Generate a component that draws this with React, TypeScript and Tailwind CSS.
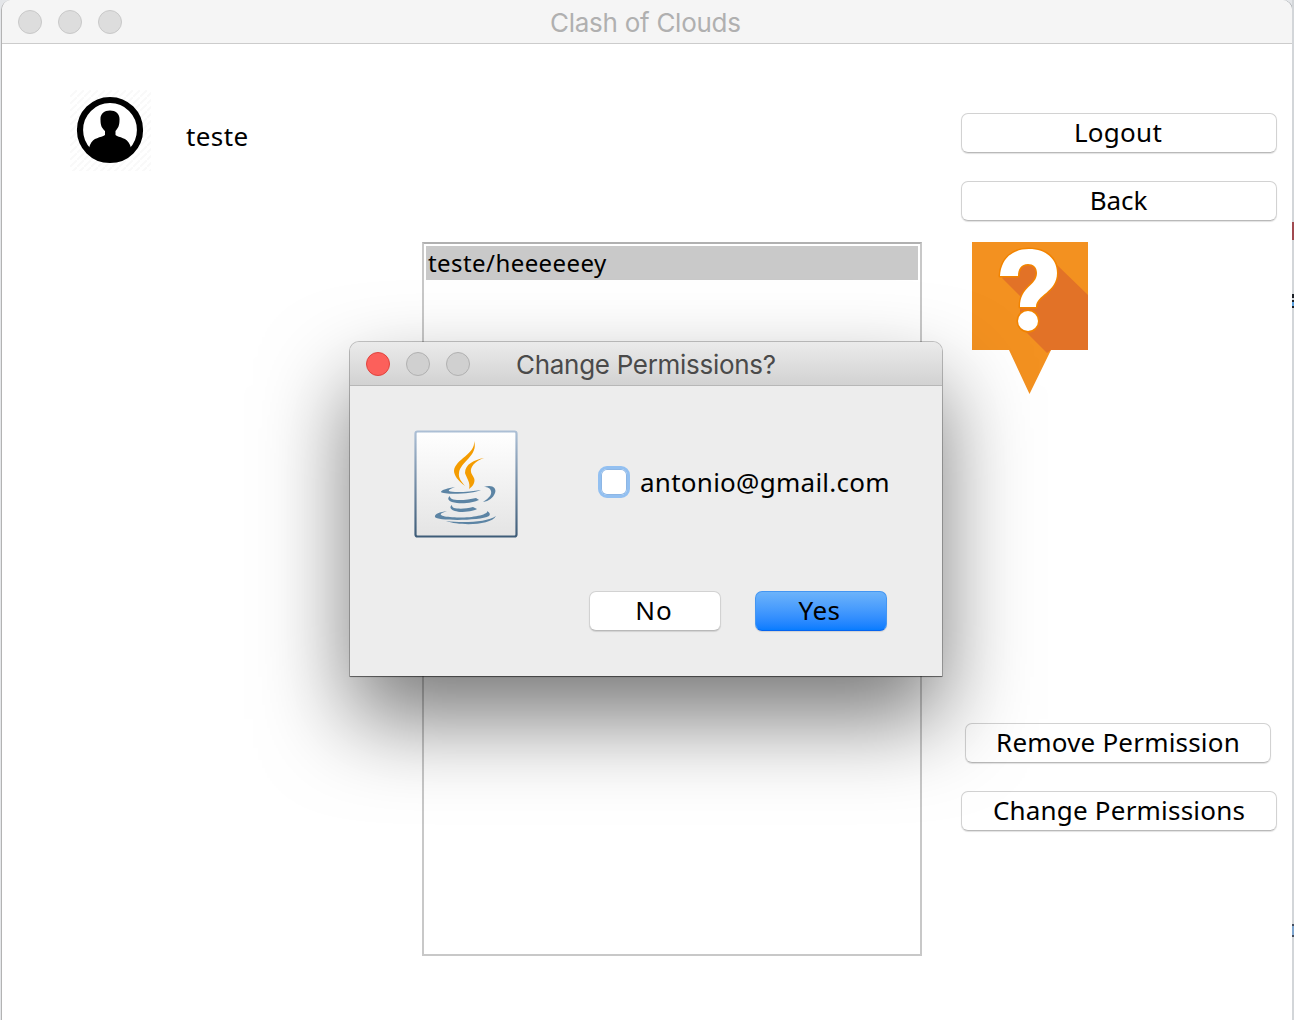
import type { ReactNode } from "react";

function Light({ red = false, dim = false }: { red?: boolean; dim?: boolean }) {
  const tone = red
    ? "border-[#e0443e] bg-[#fc605b]"
    : dim
      ? "border-[#c8c8c8] bg-[#dddddd]"
      : "border-[#b1b1b1] bg-[#d0d0d0]";
  return <span className={`h-6 w-6 rounded-full border ${tone}`} />;
}

function PushButton({
  children,
  className = "",
  primary = false,
}: {
  children: ReactNode;
  className?: string;
  primary?: boolean;
}) {
  const tone = primary
    ? "border-[#4496f2] border-b-[#0564ef] bg-linear-to-b from-[#6cb3fa] to-[#067cff]"
    : "border-[#d2d2d2] border-b-[#b9b9b9]";
  return (
    <button
      className={`flex h-10 items-center justify-center whitespace-nowrap rounded-[7px] border pb-0.5 text-[26px] leading-none text-black shadow-[0_1px_1px_rgba(0,0,0,0.12)] ${tone} ${className}`}
    >
      {children}
    </button>
  );
}

function Avatar() {
  return (
    <svg width="82" height="82" viewBox="0 0 82 82">
      <defs>
        <pattern id="hatch" width="7" height="7" patternUnits="userSpaceOnUse">
          <path d="M-1 8L8-1" stroke="#f9f9f9" strokeWidth="2" />
        </pattern>
        <clipPath id="disc">
          <circle cx="40" cy="40" r="32" />
        </clipPath>
      </defs>
      <rect width="81" height="81" fill="url(#hatch)" />
      <circle cx="40" cy="40" r="30" fill="white" stroke="black" strokeWidth="6.2" />
      <g clipPath="url(#disc)">
        <path d="M30.500 30C30 24 34 20.500 40 20.500S50 24 49.500 30C49.500 36 48 38 45.500 41V45C49 48 57 47 60 55L63 64Q54 74 40 74T17 64L20 55C23 47 31 48 35 45V41C32 38 30.500 36 30.500 30Z" />
      </g>
    </svg>
  );
}

function HelpPin() {
  return (
    <svg width="116" height="152" viewBox="0 0 116 152">
      <path d="M0 0H116V108H79L57.500 152L37 108H0Z" fill="#f39120" />
      <path d="M30 36L48 54V84L75 111L79 108H116V53L84 22L50 12Z" fill="#e27227" />
      <g stroke="#f28400" strokeWidth="3" strokeLinejoin="round" paintOrder="stroke" fill="white">
        <path d="M28 34C29 17 40 7 57 7C74 7 85 17 85 31C85 50 64 53 64 65H48C48 44 65 44 65 31C65 25 61 22 56 22C49 22 46 27 46 34Z" />
        <circle cx="56" cy="79" r="10" />
      </g>
    </svg>
  );
}

function JavaIcon() {
  return (
    <svg width="104" height="108" viewBox="0 0 104 108">
      <defs>
        <linearGradient id="tile" x2="0" y2="1">
          <stop stopColor="#fff" />
          <stop offset="1" stopColor="#e4e4e4" />
        </linearGradient>
        <linearGradient id="rim" x2="0" y2="1">
          <stop stopColor="#acbfd5" />
          <stop offset="1" stopColor="#3e5c78" />
        </linearGradient>
      </defs>
      <rect x="1.500" y="1.500" width="101" height="105" rx="2" fill="url(#tile)" stroke="url(#rim)" strokeWidth="2.200" />
      <g fill="#f49c00">
        <path d="M60 11C65 25 46 32 45 43C44 48 48 52 51 56C44 51 40 45 40 41C41 29 62 24 60 11Z" />
        <path d="M70 28C61 31 56 37 57 42C58 46 62 48 60 53C59 56 57 57 55 59C57 53 52 47 51 43C51 34 60 30 70 28Z" />
      </g>
      <g fill="#5c84a4">
        <path d="M41 57C34 58 27 60 27 62C30 65 60 64 67 60C55 62 39 63 35 61C34 60 38 58 41 57Z" />
        <path d="M70 57C78 54 83 58 81 63C79 68 75 71 69 72C75 68 78 65 77 61C76 58 74 57 70 57Z" />
        <path d="M36 66C32 69 35 72 43 73C51 74 61 72 65 70L62 68C54 70 42 71 38 69C36 68 36 67 36 66Z" />
        <path d="M38 75C34 78 38 81 46 82C53 82 60 81 63 79L59 77C52 79 44 79 40 78C38 77 38 76 38 75Z" />
        <path d="M33 81C26 82 20 84 21 87C23 91 66 91 75 86C77 84 75 82 73 81C75 84 61 87.500 48 87.500C34 87.500 23 86 28 83Z" />
        <path d="M32 91C48 93 73 92.500 82 86C77 95.500 46 96 32 91Z" />
      </g>
    </svg>
  );
}

function Dialog() {
  return (
    <section className="absolute left-[350px] top-[342px] h-[334px] w-[592px] rounded-t-[9px] bg-[#ededed] shadow-[0_0_0_1px_rgba(0,0,0,0.22),0_1px_1px_rgba(0,0,0,0.4),0_43px_88px_rgba(0,0,0,0.53)]">
      <header className="flex h-11 items-center rounded-t-[9px] border-b border-[#b7b7b7] bg-linear-to-b from-[#ebebeb] to-[#d2d2d2] pl-4 pt-px">
        <div className="flex gap-4">
          <Light red />
          <Light />
          <Light />
        </div>
        <h2 className="ml-[46px] whitespace-nowrap pt-px font-['Inter',sans-serif] text-[26px] tracking-[-0.3px] text-[#4a4a4a]">
          Change Permissions?
        </h2>
      </header>
      <div className="flex items-start pl-16 pt-11">
        <JavaIcon />
        <label className="ml-20 mt-9 flex h-8 items-center">
          <span className="h-8 w-8 rounded-[9px] border-[3px] border-[#93c0f1] bg-white shadow-[inset_0_0_0_1px_#8db6e4]" />
          <span className="ml-[10px] whitespace-nowrap text-[26px] tracking-[0.26px]">antonio@gmail.com</span>
        </label>
      </div>
      <div className="mt-[53px] flex gap-[34px] pl-[239px]">
        <PushButton className="w-[132px] bg-white pr-0.5 tracking-[1px]">No</PushButton>
        <PushButton primary className="w-[132px] pr-[3px] tracking-[0.5px]">
          Yes
        </PushButton>
      </div>
    </section>
  );
}

/** Sliver of the windows stacked behind the right edge. */
function BackgroundEdge() {
  return (
    <div className="flex w-0.5 flex-col bg-[#d3d6d9]">
      <div className="mt-[222px] h-[18px] bg-[#a04a50]" />
      <div className="mt-[54px] h-1 bg-[#1b1f26]" />
      <div className="mt-0.5 h-2 border-y-2 border-[#1b1f26] bg-[#5aa0dd]" />
      <div className="mt-[616px] h-[13px] border-y-2 border-[#444d5e] bg-[#7fa6cf]" />
    </div>
  );
}

export default function App() {
  return (
    <div className="relative flex h-[1020px] w-[1294px] overflow-hidden bg-[#e4e6e9] font-['Noto_Sans',sans-serif] text-black">
      <main className="ml-px h-[1020px] w-[1291px] shrink-0 overflow-hidden rounded-t-[10px] border-l border-[#b3b3b3] bg-white shadow-[1px_0_0_#a9adb1]">
        <header className="flex h-11 items-center border-b border-[#cccccc] bg-[#f5f5f5] pl-4">
          <div className="flex gap-4">
            <Light dim />
            <Light dim />
            <Light dim />
          </div>
          <h1 className="ml-[428px] whitespace-nowrap pt-0.5 font-['Inter',sans-serif] text-[26px] tracking-[-0.27px] text-[#b0b0b0]">
            Clash of Clouds
          </h1>
        </header>
        <div className="flex">
          <div className="flex w-[420px] shrink-0 items-start pl-[68px] pt-[46px]">
            <Avatar />
            <span className="ml-[34px] mt-7 text-[26px] leading-9 tracking-[0.4px]">teste</span>
          </div>
          <div className="mt-[198px] h-[714px] w-[500px] shrink-0 border-2 border-[#c8c8c8] border-t-[#b0b0b0] p-0.5">
            <div className="h-[34px] bg-[#c9c9c9] pl-0.5 text-2xl leading-[34px] tracking-[0.43px]">teste/heeeeeey</div>
          </div>
          <div className="ml-[39px] flex w-[316px] shrink-0 flex-col pt-[69px]">
            <PushButton className="pr-0.5 tracking-[0.25px]">Logout</PushButton>
            <PushButton className="mt-7 pr-px tracking-[-0.1px]">Back</PushButton>
            <div className="ml-[11px] mt-[21px] h-[152px]">
              <HelpPin />
            </div>
            <PushButton className="mx-1 mt-[329px] w-[306px] tracking-[0.2px]">Remove Permission</PushButton>
            <PushButton className="mt-7 tracking-[0.2px]">Change Permissions</PushButton>
          </div>
        </div>
      </main>
      <BackgroundEdge />
      <Dialog />
    </div>
  );
}
